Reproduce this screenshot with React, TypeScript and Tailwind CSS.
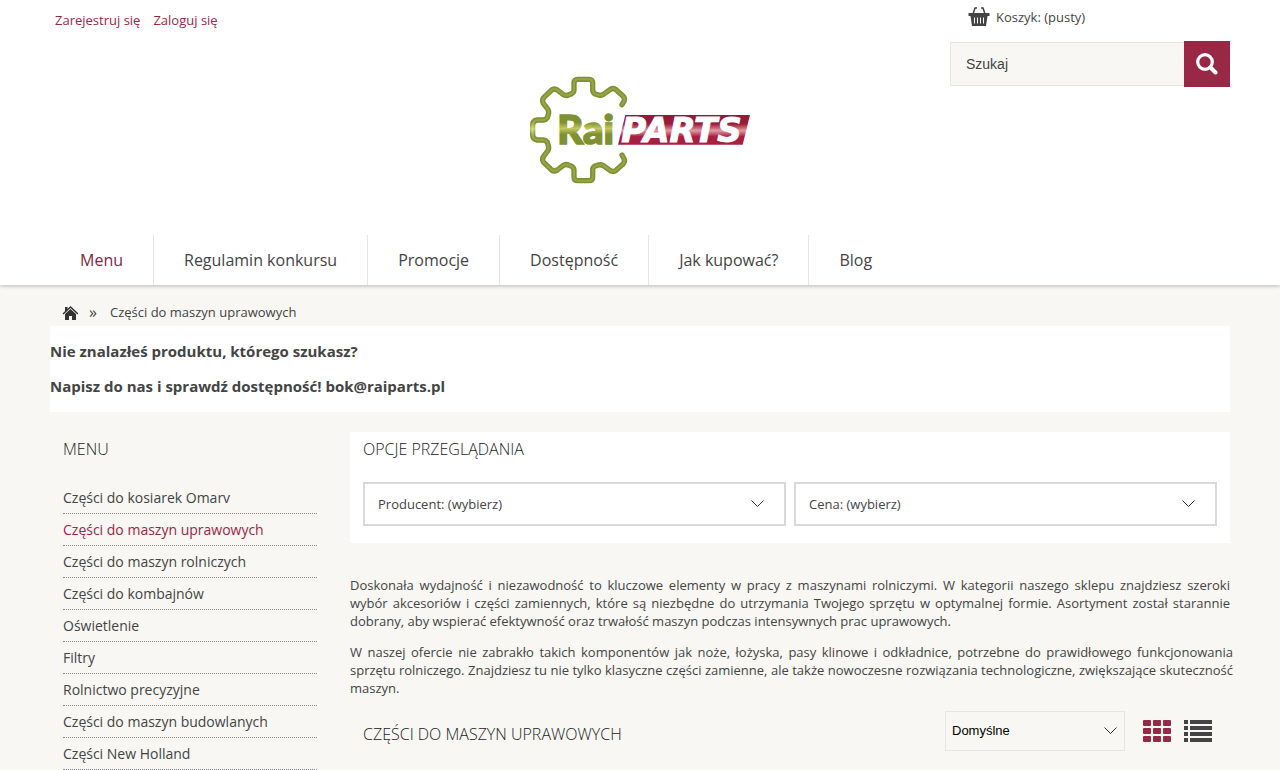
import { useState } from "react";

const NAV_ITEMS = ["Menu", "Regulamin konkursu", "Promocje", "Dostępność", "Jak kupować?", "Blog"];

const CATEGORIES = [
  "Części do kosiarek Omarv",
  "Części do maszyn uprawowych",
  "Części do maszyn rolniczych",
  "Części do kombajnów",
  "Oświetlenie",
  "Filtry",
  "Rolnictwo precyzyjne",
  "Części do maszyn budowlanych",
  "Części New Holland",
];

const ACTIVE_CATEGORY = "Części do maszyn uprawowych";

const GEAR_PATH =
  "M306 119 L312 109 Q316 100 309 93 L288 74 Q280 68 271 73 L250 88 Q241 93 232 89 L224 86 Q218 82 218 75 L218 55 Q218 43 207 43 L173 43 Q162 43 162 55 L162 75 Q162 82 155 86 L145 90 Q137 94 129 88 L112 75 Q103 69 95 75 L71 98 Q65 106 70 115 L83 132 Q88 140 85 148 L82 158 Q78 164 70 165 L52 165 Q38 167 38 180 L38 210 Q38 223 52 225 L70 225 Q78 226 82 232 L85 242 Q88 250 83 258 L70 275 Q65 284 71 292 L95 315 Q103 321 112 315 L129 302 Q137 296 145 300 L155 304 Q162 308 162 315 L162 335 Q162 347 173 347 L207 347 Q218 347 218 335 L218 315 Q218 308 224 304 L232 301 Q241 297 250 302 L271 317 Q280 322 288 316 L309 297 Q316 290 312 281 L306 270";

function Logo() {
  return (
    <svg viewBox="24 30 672 330" className="h-[110px] w-[224px]" role="img" aria-label="RaiParts">
      <defs>
        <linearGradient id="green" x1="0" y1="150" x2="0" y2="240" gradientUnits="userSpaceOnUse">
          <stop offset="0.25" stopColor="#7f9131" />
          <stop offset="0.45" stopColor="#c3c95c" />
          <stop offset="0.65" stopColor="#7f9131" />
        </linearGradient>
        <linearGradient id="highlight" x1="0" y1="150" x2="0" y2="240" gradientUnits="userSpaceOnUse">
          <stop offset="0.2" stopColor="#97a54a" />
          <stop offset="0.48" stopColor="#dcdf90" />
          <stop offset="0.75" stopColor="#97a54a" />
        </linearGradient>
        <linearGradient id="red" x1="0" y1="150" x2="0" y2="240" gradientUnits="userSpaceOnUse">
          <stop offset="0" stopColor="#8e1a36" />
          <stop offset="0.3" stopColor="#9c1c3a" />
          <stop offset="0.52" stopColor="#e39aa2" />
          <stop offset="0.72" stopColor="#ab1f40" />
          <stop offset="1" stopColor="#a81f3f" />
        </linearGradient>
      </defs>
      <path d={GEAR_PATH} fill="none" stroke="url(#green)" strokeWidth="16" strokeLinecap="round" strokeLinejoin="round" />
      <path d={GEAR_PATH} fill="none" stroke="url(#highlight)" strokeWidth="6" strokeLinecap="round" strokeLinejoin="round" />
      <text x="112" y="236" fontSize="120" fill="url(#green)" stroke="url(#green)" strokeWidth="5" className="font-['Lato'] font-black">
        Rai
      </text>
      <path d="M316 150 H690 L668 239 H294 Z" fill="url(#red)" />
      <text x="304" y="231" fontSize="102" fill="#fff" stroke="#fff" strokeWidth="3" className="font-['DejaVu_Sans'] font-bold italic">
        PARTS
      </text>
    </svg>
  );
}

function BasketIcon() {
  return (
    <svg viewBox="0 0 22 20" className="h-5 w-[22px]" aria-hidden="true">
      <path d="M5 7 7 1h2M17 7l-2-6h-2" fill="none" stroke="#444" strokeWidth="1.5" />
      <path d="M.5 6h21v3h-21z" fill="#444" />
      <path d="M2.5 9h17L18 19H4z" fill="#444" />
      <path d="M6.5 10.5v6M9.5 10.5v6M12.5 10.5v6M15.5 10.5v6" stroke="#fff" />
    </svg>
  );
}

function HomeIcon() {
  return (
    <svg viewBox="0 0 16 16" className="size-4" aria-hidden="true">
      <path d="M1 9 8.5 2 16 9" fill="none" stroke="#333" strokeWidth="1.5" />
      <path d="M3 2h2.5v2.5L3 7z" fill="#333" />
      <path d="M8.5 4 14 9v6h-4v-4H7v4H3V9z" fill="#333" />
    </svg>
  );
}

function Chevron() {
  return (
    <svg viewBox="0 0 13 8" className="h-2 w-[13px]" aria-hidden="true">
      <path d="M.5.5l6 6 6-6" fill="none" stroke="#333" />
    </svg>
  );
}

function FilterButton({ label }: { label: string }) {
  return (
    <button
      type="button"
      className="flex h-11 flex-1 items-center justify-between border-2 border-[#d9d9d9] bg-white pr-5 pl-[13px] text-[13px]"
    >
      <span>{label}</span>
      <Chevron />
    </button>
  );
}

export default function App() {
  const [query, setQuery] = useState("");
  const [sort, setSort] = useState("default");

  return (
    <div className="min-h-screen bg-[#f8f7f3] font-['Open_Sans',sans-serif] text-[13px] leading-[18px] text-[#444]">
      <header className="relative bg-white shadow-[0_1px_4px_rgba(0,0,0,0.25)]">
        <div className="mx-auto max-w-[1180px]">
          <div className="flex h-[75px] items-start justify-between">
            <div className="flex gap-[13px] pt-[11px] pl-[5px] text-[#992746]">
              <a href="#register">Zarejestruj się</a>
              <a href="#login">Zaloguj się</a>
            </div>
            <div className="w-[280px] pt-[7px]">
              <a href="#basket" className="flex h-5 items-center gap-[6px] pl-[18px]">
                <BasketIcon />
                Koszyk: (pusty)
              </a>
              <form className="mt-[14px] flex h-[46px] items-center" onSubmit={(e) => e.preventDefault()}>
                <input
                  type="text"
                  aria-label="Szukaj"
                  placeholder="Szukaj"
                  value={query}
                  onChange={(e) => setQuery(e.target.value)}
                  className="h-11 min-w-0 flex-1 border border-r-0 border-[#e5e5e5] bg-[#f8f7f3] px-[15px] font-['Liberation_Sans',sans-serif] text-sm placeholder:text-[#444] focus:outline-none"
                />
                <button type="submit" aria-label="Szukaj" className="flex h-full w-[46px] items-center justify-center bg-[#992746]">
                  <svg viewBox="0 0 22 22" className="h-[22px] w-[22px]" aria-hidden="true">
                    <circle cx="9" cy="9" r="7.3" fill="none" stroke="#fff" strokeWidth="3.2" />
                    <path d="m14.5 14.5 5 5" stroke="#fff" strokeWidth="4" strokeLinecap="round" />
                  </svg>
                </button>
              </form>
            </div>
          </div>

          <a href="#home" className="mx-auto block h-[160px] w-[224px]">
            <Logo />
          </a>

          <nav>
            <ul className="flex h-[50px] items-stretch text-base">
              {NAV_ITEMS.map((item) => (
                <li key={item} className="border-r border-[#e5e5e5] first:text-[#822844] last:border-r-0">
                  <a href="#nav" className="flex h-full items-center px-[30px]">
                    {item}
                  </a>
                </li>
              ))}
            </ul>
          </nav>
        </div>
      </header>

      <main className="mx-auto max-w-[1180px]">
        <div className="flex h-[41px] items-center pt-3 pl-3">
          <a href="#home" aria-label="Strona główna" className="pt-[3px]">
            <HomeIcon />
          </a>
          <span className="ml-[11px] w-[21px] text-base">»</span>
          <span>Części do maszyn uprawowych</span>
        </div>

        <section className="bg-white pt-[15px] pb-4 text-[15px] leading-5 font-bold">
          <p>Nie znalazłeś produktu, którego szukasz?</p>
          <p className="mt-[15px]">Napisz do nas i sprawdź dostępność! bok@raiparts.pl</p>
        </section>

        <div className="mt-5 flex gap-5">
          <aside className="w-[280px] shrink-0 px-[13px] pt-[5px]">
            <h2 className="text-base font-light text-[#222]">MENU</h2>
            <ul className="mt-[21px] text-sm">
              {CATEGORIES.map((name) => (
                <li key={name} className="flex h-8 items-center border-b border-dotted border-[#888]">
                  <a href="#category" className={name === ACTIVE_CATEGORY ? "text-[#992746]" : ""}>
                    {name}
                  </a>
                </li>
              ))}
            </ul>
          </aside>

          <div className="min-w-0 flex-1">
            <section className="bg-white px-[13px] pt-[5px] pb-[17px]">
              <h2 className="text-base font-light text-[#222]">OPCJE PRZEGLĄDANIA</h2>
              <div className="mt-[21px] flex gap-2">
                <FilterButton label="Producent: (wybierz)" />
                <FilterButton label="Cena: (wybierz)" />
              </div>
            </section>

            <div className="mt-[33px] space-y-[13px] text-justify">
              <p>
                Doskonała wydajność i niezawodność to kluczowe elementy w pracy z maszynami rolniczymi. W kategorii
                naszego sklepu znajdziesz szeroki wybór akcesoriów i części zamiennych, które są niezbędne do utrzymania
                Twojego sprzętu w optymalnej formie. Asortyment został starannie dobrany, aby wspierać efektywność oraz
                trwałość maszyn podczas intensywnych prac uprawowych.
              </p>
              <p className="-mr-[3px]">
                W naszej ofercie nie zabrakło takich komponentów jak noże, łożyska, pasy klinowe i odkładnice, potrzebne
                do prawidłowego funkcjonowania sprzętu rolniczego. Znajdziesz tu nie tylko klasyczne części zamienne, ale
                także nowoczesne rozwiązania technologiczne, zwiększające skuteczność maszyn.
              </p>
            </div>

            <div className="mt-[14px] flex h-10 items-center justify-between pr-[18px] pl-[13px]">
              <h1 className="pt-[6px] text-base font-light text-[#222]">CZĘŚCI DO MASZYN UPRAWOWYCH</h1>
              <div className="flex items-center">
                <div className="relative">
                  <select
                    aria-label="Sortowanie"
                    value={sort}
                    onChange={(e) => setSort(e.target.value)}
                    className="h-10 w-[180px] appearance-none border border-[#e5e5e5] bg-transparent px-[6px] font-['Liberation_Sans',sans-serif] text-[13px] text-black"
                  >
                    <option value="default">Domyślne</option>
                    <option value="name">Nazwa</option>
                    <option value="price">Cena</option>
                  </select>
                  <span className="pointer-events-none absolute inset-y-0 right-2 flex items-center">
                    <Chevron />
                  </span>
                </div>
                <button type="button" aria-label="Widok siatki" className="ml-[18px]">
                  <svg viewBox="0 0 28 22" className="h-[22px] w-7" fill="#992746" aria-hidden="true">
                    {[0, 8, 16].map((y) =>
                      [0, 10, 20].map((x) => <rect key={`${x}-${y}`} x={x} y={y} width="8" height="6" rx="1" />)
                    )}
                  </svg>
                </button>
                <button type="button" aria-label="Widok listy" className="ml-[13px]">
                  <svg viewBox="0 0 28 22" className="h-[22px] w-7" fill="#444" aria-hidden="true">
                    {[0, 6, 12, 18].map((y) => (
                      <path key={y} d={`M0 ${y}h4v4h-4zM6 ${y}h22v4h-22z`} />
                    ))}
                  </svg>
                </button>
              </div>
            </div>
          </div>
        </div>
      </main>
    </div>
  );
}
